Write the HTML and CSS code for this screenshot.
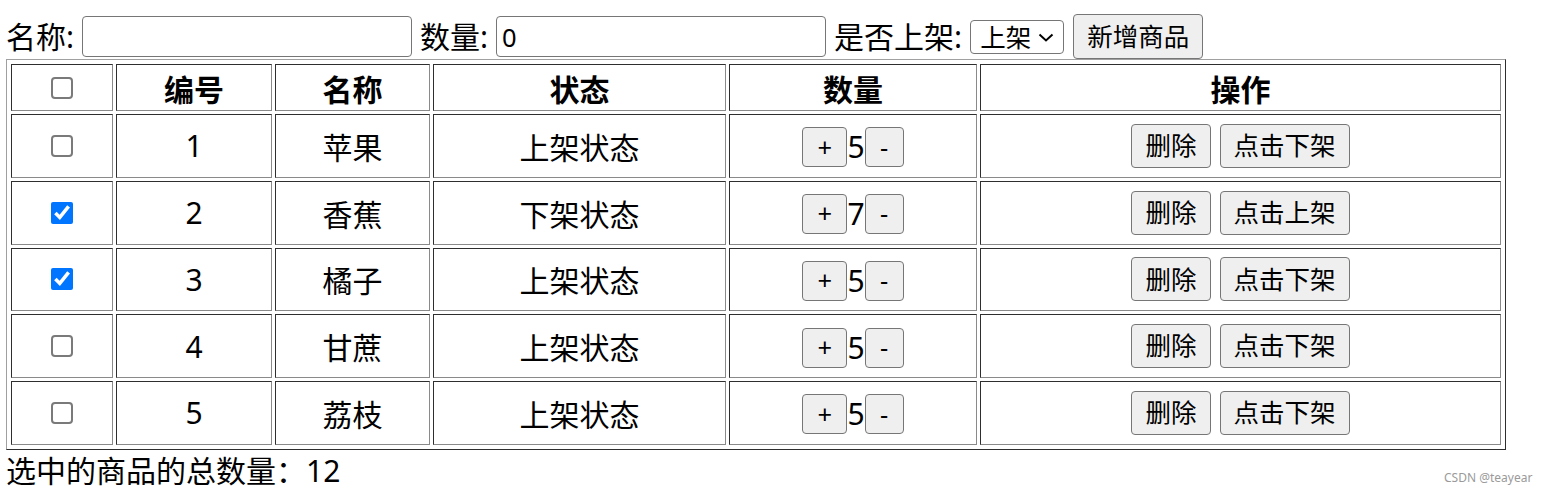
FILE: index.html
```
<!DOCTYPE html>
<html lang="zh-CN">
<head>
<meta charset="utf-8">
<title>商品管理</title>
<link rel="stylesheet" href="styles.css">
</head>
<body>
<div class="page">
  <div class="toolbar">
    <label class="lbl">名称:</label>
    <input class="field" type="text">
    <label class="lbl">数量:</label>
    <input class="field" type="text" value="0">
    <label class="lbl">是否上架:</label>
    <span class="sel-wrap">
      <select class="sel"><option>上架</option><option>下架</option></select>
      <svg class="sel-arrow" width="16" height="9" viewBox="0 0 16 9" aria-hidden="true"><path d="M1.5 1.5 L8 7.5 L14.5 1.5" fill="none" stroke="#000" stroke-width="2"/></svg>
    </span>
    <button class="btn btn-add">新增商品</button>
  </div>
  <table class="goods">
    <thead>
      <tr>
        <th class="c-check"><input class="chk" type="checkbox"></th>
        <th class="c-id">编号</th>
        <th class="c-name">名称</th>
        <th class="c-state">状态</th>
        <th class="c-qty">数量</th>
        <th class="c-op">操作</th>
      </tr>
    </thead>
    <tbody>
      <tr>
        <td><input class="chk" type="checkbox"></td>
        <td>1</td>
        <td>苹果</td>
        <td>上架状态</td>
        <td><div class="qty"><button class="btn step plus">+</button><span class="num">5</span><button class="btn step minus">-</button></div></td>
        <td><div class="ops"><button class="btn">删除</button><button class="btn">点击下架</button></div></td>
      </tr>
      <tr>
        <td><input class="chk" type="checkbox" checked></td>
        <td>2</td>
        <td>香蕉</td>
        <td>下架状态</td>
        <td><div class="qty"><button class="btn step plus">+</button><span class="num">7</span><button class="btn step minus">-</button></div></td>
        <td><div class="ops"><button class="btn">删除</button><button class="btn">点击上架</button></div></td>
      </tr>
      <tr>
        <td><input class="chk" type="checkbox" checked></td>
        <td>3</td>
        <td>橘子</td>
        <td>上架状态</td>
        <td><div class="qty"><button class="btn step plus">+</button><span class="num">5</span><button class="btn step minus">-</button></div></td>
        <td><div class="ops"><button class="btn">删除</button><button class="btn">点击下架</button></div></td>
      </tr>
      <tr>
        <td><input class="chk" type="checkbox"></td>
        <td>4</td>
        <td>甘蔗</td>
        <td>上架状态</td>
        <td><div class="qty"><button class="btn step plus">+</button><span class="num">5</span><button class="btn step minus">-</button></div></td>
        <td><div class="ops"><button class="btn">删除</button><button class="btn">点击下架</button></div></td>
      </tr>
      <tr>
        <td><input class="chk" type="checkbox"></td>
        <td>5</td>
        <td>荔枝</td>
        <td>上架状态</td>
        <td><div class="qty"><button class="btn step plus">+</button><span class="num">5</span><button class="btn step minus">-</button></div></td>
        <td><div class="ops"><button class="btn">删除</button><button class="btn">点击下架</button></div></td>
      </tr>
    </tbody>
  </table>
  <div class="total">选中的商品的总数量：12</div>
</div>
<div class="mark">CSDN @teayear</div>
</body>
</html>
```

FILE: styles.css
```
html, body {
  margin: 0;
  background: #fff;
}
body {
  position: relative;
  min-height: 495px;
  font-family: "Noto Sans", "Noto Sans CJK SC", sans-serif;
  font-size: 30px;
  color: #000;
}
.page {
  padding-left: 6px;
}
.toolbar {
  display: flex;
  align-items: center;
  height: 45px;
  margin-top: 14px;
}
.lbl {
  line-height: 40px;
  white-space: nowrap;
}
.field {
  box-sizing: border-box;
  width: 330px;
  height: 41px;
  margin: 0 8px;
  padding: 0 5px;
  font-family: "Noto Sans", "Noto Sans CJK SC", sans-serif;
  font-size: 25.5px;
  color: #000;
  background: #fff;
  border: 1px solid #767676;
  border-radius: 4px;
}
.sel-wrap {
  position: relative;
  display: flex;
  margin-left: 8px;
}
.sel {
  -webkit-appearance: none;
  appearance: none;
  box-sizing: border-box;
  width: 94px;
  height: 34px;
  margin: 0;
  padding: 0 0 0 9px;
  font-family: "Noto Sans", "Noto Sans CJK SC", sans-serif;
  font-size: 25.5px;
  line-height: 32px;
  color: #000;
  background-color: #fff;
  border: 1px solid #767676;
  border-radius: 4px;
}
.sel-arrow {
  position: absolute;
  left: 68px;
  top: 13px;
  pointer-events: none;
}
.btn {
  box-sizing: border-box;
  height: 44px;
  padding: 0 13px;
  font-family: "Noto Sans", "Noto Sans CJK SC", sans-serif;
  font-size: 25.5px;
  line-height: 1;
  color: #000;
  background: #efefef;
  border: 1px solid #767676;
  border-radius: 4px;
}
.btn-add {
  height: 45px;
  margin-left: 9px;
}
.goods {
  box-sizing: border-box;
  width: 1500px;
  table-layout: fixed;
  border-collapse: separate;
  border-spacing: 3px;
  padding: 1px;
  border: 1px solid;
  border-color: #a0a0a0 #2e2e2e #2e2e2e #a0a0a0;
}
.goods th,
.goods td {
  box-sizing: border-box;
  padding: 0;
  border: 1px solid;
  border-color: #2e2e2e #8a8a8a #8a8a8a #2e2e2e;
  text-align: center;
  vertical-align: middle;
}
.goods th {
  height: 47px;
  font-weight: bold;
}
.goods td {
  height: 63.75px;
}
.c-check { width: 102px; }
.c-id { width: 156px; }
.c-name { width: 155px; }
.c-state { width: 293px; }
.c-qty { width: 248px; }
.chk {
  display: block;
  box-sizing: border-box;
  width: 22px;
  height: 22px;
  margin: 0 auto;
}
.chk:not(:checked) {
  -webkit-appearance: none;
  appearance: none;
  background: #fff;
  border: 2px solid #7a7a7a;
  border-radius: 4px;
}
.qty {
  display: flex;
  justify-content: center;
  align-items: center;
  padding-top: 3px;
}
.step {
  height: 40px;
  padding: 0;
}
.plus { width: 45px; }
.minus { width: 39px; }
.num {
  line-height: 40px;
}
.ops {
  display: flex;
  justify-content: center;
  align-items: center;
  gap: 9px;
}
.total {
  line-height: 42px;
}
.mark {
  position: absolute;
  left: 1444px;
  top: 469px;
  font-family: "Noto Sans", sans-serif;
  font-size: 12px;
  color: #9a9a9a;
}
```
